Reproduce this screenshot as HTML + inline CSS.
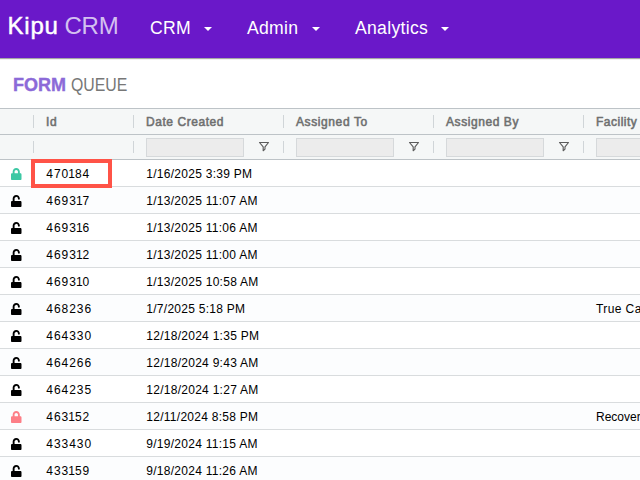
<!DOCTYPE html>
<html><head><meta charset="utf-8">
<style>
*{box-sizing:border-box;margin:0;padding:0}
html,body{width:640px;height:480px;overflow:hidden;background:#fff;font-family:"Liberation Sans",sans-serif;}
#nav{position:absolute;left:0;top:0;width:640px;height:58px;background:#6a18c9;box-shadow:0 1px 1px rgba(0,0,0,.35);}
#nav .logo{position:absolute;left:7.5px;top:9.5px;font-size:24px;line-height:32px;color:#fff;white-space:nowrap}
#nav .logo .k{-webkit-text-stroke:0.45px #fff;letter-spacing:0.8px}
#nav .logo .l{color:#d3c0f0;font-weight:normal;letter-spacing:-0.2px;margin-left:-1px}
#nav .it{position:absolute;top:17px;font-size:17.6px;letter-spacing:0.3px;line-height:22px;color:#fff;white-space:nowrap}
#nav .car{position:absolute;top:27px;width:0;height:0;border-left:4px solid transparent;border-right:4px solid transparent;border-top:4px solid #fff}
#title{position:absolute;left:13px;top:73px;font-size:18px;line-height:24px;white-space:nowrap}
#title b{color:#8c6ad8;-webkit-text-stroke:0.4px #8c6ad8}
#title span{color:#777;display:inline-block;transform-origin:0 50%;transform:scaleX(.88)}
#grid{position:absolute;left:0;top:108px;width:640px;height:372px;border-top:1px solid #bdc3c7;font-size:12px;color:#000}
.hr{position:absolute;left:0;width:640px;background:#f5f7f7;border-bottom:1px solid #bdc3c7}
.hc{position:absolute;top:0;height:100%;font-weight:normal;-webkit-text-stroke:0.55px #6f7070;color:#6f7070;font-size:12px;line-height:27px;white-space:nowrap;letter-spacing:0.55px}
.sep{position:absolute;width:1px;background:#d0d5d8}
.fi{position:absolute;top:3px;height:19px;background:#ececec;border:1px solid #d6d9db}
.row{position:absolute;left:0;width:640px;height:27px;border-bottom:1px solid #d9dcde;background:#fff}
.row.o{background:#fcfdfe}
.c{position:absolute;top:0;line-height:28px;white-space:nowrap;font-size:12px}
.c.i{letter-spacing:0.95px}
.c.i .n{letter-spacing:0;margin-left:-0.9px}
.c.d{letter-spacing:0.27px}
.lk{position:absolute;left:11.2px;top:7.7px;width:10.5px;height:12px}
.hl{position:absolute;left:31px;top:50px;width:81px;height:29px;border:4px solid #ff5347;}
.fu{position:absolute;top:5px;width:14px;height:14px;overflow:visible}
</style></head><body>
<div id="nav">
 <div class="logo"><span class="k">Kipu</span> <span class="l">CRM</span></div>
 <div class="it" style="left:150px">CRM</div><div class="car" style="left:204px"></div>
 <div class="it" style="left:247px">Admin</div><div class="car" style="left:312px"></div>
 <div class="it" style="left:355px">Analytics</div><div class="car" style="left:441px"></div>
</div>
<div id="title"><b>FORM</b> <span>QUEUE</span></div>
<div id="grid">
 <div class="hr" style="top:0;height:26px">
  <div class="hc" style="left:46px">Id</div>
  <div class="hc" style="left:146px">Date Created</div>
  <div class="hc" style="left:296px;letter-spacing:0.6px">Assigned To</div>
  <div class="hc" style="left:446px;letter-spacing:0.57px">Assigned By</div>
  <div class="hc" style="left:596px;letter-spacing:0.5px">Facility</div>
  <div class="sep" style="left:33px;top:6px;height:13px"></div>
  <div class="sep" style="left:133px;top:6px;height:13px"></div>
  <div class="sep" style="left:283px;top:6px;height:13px"></div>
  <div class="sep" style="left:433px;top:6px;height:13px"></div>
  <div class="sep" style="left:583px;top:6px;height:13px"></div>
 </div>
 <div class="hr" style="top:26px;height:25px">
  <div class="sep" style="left:33px;top:6px;height:12px"></div>
  <div class="sep" style="left:133px;top:6px;height:12px"></div>
  <div class="sep" style="left:283px;top:6px;height:12px"></div>
  <div class="sep" style="left:433px;top:6px;height:12px"></div>
  <div class="sep" style="left:583px;top:6px;height:12px"></div>
<svg class="fu" style="left:257px" viewBox="0 0 14 14"><path d="M2.5 2.5H11.5L8 6.9V9.1L6.2 10.7V6.9Z" fill="#aaa" fill-opacity="0" stroke="#5c5c5c" stroke-width="1.15" stroke-linejoin="round"/></svg><svg class="fu" style="left:407px" viewBox="0 0 14 14"><path d="M2.5 2.5H11.5L8 6.9V9.1L6.2 10.7V6.9Z" fill="#aaa" fill-opacity="0" stroke="#5c5c5c" stroke-width="1.15" stroke-linejoin="round"/></svg><svg class="fu" style="left:557px" viewBox="0 0 14 14"><path d="M2.5 2.5H11.5L8 6.9V9.1L6.2 10.7V6.9Z" fill="#aaa" fill-opacity="0" stroke="#5c5c5c" stroke-width="1.15" stroke-linejoin="round"/></svg>
  <div class="fi" style="left:146px;width:98px"></div>
  <div class="fi" style="left:296px;width:98px"></div>
  <div class="fi" style="left:446px;width:98px"></div>
  <div class="fi" style="left:596px;width:60px"></div>
 </div>
 <div id="rows">
<div class="row" style="top:51px"><svg class="lk" viewBox="0 0 448 512"><path fill="#3cc8a4" d="M400 224h-24v-72C376 68.200 307.800 0 224 0S72 68.200 72 152v72H48c-26.500 0-48 21.500-48 48v192c0 26.500 21.500 48 48 48h352c26.500 0 48-21.500 48-48V272c0-26.500-21.500-48-48-48zm-104 0H152v-72c0-39.700 32.300-72 72-72s72 32.300 72 72v72z"/></svg><div class="c i" style="left:46.3px">470<span class="n">1</span>84</div><div class="c d" style="left:146.3px">1/16/2025 3:39 PM</div></div>
<div class="row o" style="top:78px"><svg class="lk" viewBox="0 0 448 512"><path fill="#000" d="M400 256H152V152.900c0-39.600 31.700-72.500 71.300-72.900 40-.4 72.700 32.100 72.700 72v16c0 13.300 10.700 24 24 24h32c13.300 0 24-10.700 24-24v-16C376 68 307.500-.3 223.500 0 139.500.3 72 69.500 72 153.500V256H48c-26.500 0-48 21.500-48 48v160c0 26.500 21.500 48 48 48h352c26.500 0 48-21.500 48-48V304c0-26.500-21.500-48-48-48z"/></svg><div class="c i" style="left:46.3px">4693<span class="n">1</span>7</div><div class="c d" style="left:146.3px">1/13/2025 11:07 AM</div></div>
<div class="row" style="top:105px"><svg class="lk" viewBox="0 0 448 512"><path fill="#000" d="M400 256H152V152.900c0-39.600 31.700-72.500 71.300-72.900 40-.4 72.700 32.100 72.700 72v16c0 13.300 10.700 24 24 24h32c13.300 0 24-10.700 24-24v-16C376 68 307.500-.3 223.500 0 139.500.3 72 69.500 72 153.500V256H48c-26.500 0-48 21.500-48 48v160c0 26.500 21.500 48 48 48h352c26.500 0 48-21.500 48-48V304c0-26.500-21.500-48-48-48z"/></svg><div class="c i" style="left:46.3px">4693<span class="n">1</span>6</div><div class="c d" style="left:146.3px">1/13/2025 11:06 AM</div></div>
<div class="row o" style="top:132px"><svg class="lk" viewBox="0 0 448 512"><path fill="#000" d="M400 256H152V152.900c0-39.600 31.700-72.500 71.300-72.900 40-.4 72.700 32.100 72.700 72v16c0 13.300 10.700 24 24 24h32c13.300 0 24-10.700 24-24v-16C376 68 307.500-.3 223.500 0 139.500.3 72 69.500 72 153.500V256H48c-26.500 0-48 21.500-48 48v160c0 26.500 21.500 48 48 48h352c26.500 0 48-21.500 48-48V304c0-26.500-21.500-48-48-48z"/></svg><div class="c i" style="left:46.3px">4693<span class="n">1</span>2</div><div class="c d" style="left:146.3px">1/13/2025 11:00 AM</div></div>
<div class="row" style="top:159px"><svg class="lk" viewBox="0 0 448 512"><path fill="#000" d="M400 256H152V152.900c0-39.600 31.700-72.500 71.300-72.900 40-.4 72.700 32.100 72.700 72v16c0 13.300 10.700 24 24 24h32c13.300 0 24-10.700 24-24v-16C376 68 307.500-.3 223.500 0 139.500.3 72 69.500 72 153.500V256H48c-26.500 0-48 21.500-48 48v160c0 26.500 21.500 48 48 48h352c26.500 0 48-21.500 48-48V304c0-26.500-21.500-48-48-48z"/></svg><div class="c i" style="left:46.3px">4693<span class="n">1</span>0</div><div class="c d" style="left:146.3px">1/13/2025 10:58 AM</div></div>
<div class="row o" style="top:186px"><svg class="lk" viewBox="0 0 448 512"><path fill="#000" d="M400 256H152V152.900c0-39.600 31.700-72.500 71.300-72.900 40-.4 72.700 32.100 72.700 72v16c0 13.300 10.700 24 24 24h32c13.300 0 24-10.700 24-24v-16C376 68 307.500-.3 223.500 0 139.500.3 72 69.500 72 153.500V256H48c-26.500 0-48 21.500-48 48v160c0 26.500 21.500 48 48 48h352c26.500 0 48-21.500 48-48V304c0-26.500-21.500-48-48-48z"/></svg><div class="c i" style="left:46.3px">468236</div><div class="c d" style="left:146.3px">1/7/2025 5:18 PM</div><div class="c" style="left:596px;letter-spacing:0.4px">True Care</div></div>
<div class="row" style="top:213px"><svg class="lk" viewBox="0 0 448 512"><path fill="#000" d="M400 256H152V152.900c0-39.600 31.700-72.500 71.300-72.900 40-.4 72.700 32.100 72.700 72v16c0 13.300 10.700 24 24 24h32c13.300 0 24-10.700 24-24v-16C376 68 307.500-.3 223.500 0 139.500.3 72 69.500 72 153.500V256H48c-26.500 0-48 21.500-48 48v160c0 26.500 21.500 48 48 48h352c26.500 0 48-21.500 48-48V304c0-26.500-21.500-48-48-48z"/></svg><div class="c i" style="left:46.3px">464330</div><div class="c d" style="left:146.3px">12/18/2024 1:35 PM</div></div>
<div class="row o" style="top:240px"><svg class="lk" viewBox="0 0 448 512"><path fill="#000" d="M400 256H152V152.900c0-39.600 31.700-72.500 71.300-72.900 40-.4 72.700 32.100 72.700 72v16c0 13.300 10.700 24 24 24h32c13.300 0 24-10.700 24-24v-16C376 68 307.500-.3 223.500 0 139.500.3 72 69.500 72 153.500V256H48c-26.500 0-48 21.500-48 48v160c0 26.500 21.500 48 48 48h352c26.500 0 48-21.500 48-48V304c0-26.500-21.500-48-48-48z"/></svg><div class="c i" style="left:46.3px">464266</div><div class="c d" style="left:146.3px">12/18/2024 9:43 AM</div></div>
<div class="row" style="top:267px"><svg class="lk" viewBox="0 0 448 512"><path fill="#000" d="M400 256H152V152.900c0-39.600 31.700-72.500 71.300-72.900 40-.4 72.700 32.100 72.700 72v16c0 13.300 10.700 24 24 24h32c13.300 0 24-10.700 24-24v-16C376 68 307.500-.3 223.500 0 139.500.3 72 69.500 72 153.500V256H48c-26.500 0-48 21.500-48 48v160c0 26.500 21.500 48 48 48h352c26.500 0 48-21.500 48-48V304c0-26.500-21.500-48-48-48z"/></svg><div class="c i" style="left:46.3px">464235</div><div class="c d" style="left:146.3px">12/18/2024 1:27 AM</div></div>
<div class="row o" style="top:294px"><svg class="lk" viewBox="0 0 448 512"><path fill="#fd7f87" d="M400 224h-24v-72C376 68.200 307.800 0 224 0S72 68.200 72 152v72H48c-26.500 0-48 21.500-48 48v192c0 26.500 21.500 48 48 48h352c26.500 0 48-21.500 48-48V272c0-26.500-21.500-48-48-48zm-104 0H152v-72c0-39.700 32.300-72 72-72s72 32.300 72 72v72z"/></svg><div class="c i" style="left:46.3px">463<span class="n">1</span>52</div><div class="c d" style="left:146.3px">12/11/2024 8:58 PM</div><div class="c" style="left:596px">Recovery</div></div>
<div class="row" style="top:321px"><svg class="lk" viewBox="0 0 448 512"><path fill="#000" d="M400 256H152V152.900c0-39.600 31.700-72.500 71.300-72.900 40-.4 72.700 32.100 72.700 72v16c0 13.300 10.700 24 24 24h32c13.300 0 24-10.700 24-24v-16C376 68 307.500-.3 223.500 0 139.500.3 72 69.500 72 153.500V256H48c-26.500 0-48 21.500-48 48v160c0 26.500 21.500 48 48 48h352c26.500 0 48-21.500 48-48V304c0-26.500-21.500-48-48-48z"/></svg><div class="c i" style="left:46.3px">433430</div><div class="c d" style="left:146.3px">9/19/2024 11:15 AM</div></div>
<div class="row o" style="top:348px"><svg class="lk" viewBox="0 0 448 512"><path fill="#000" d="M400 256H152V152.900c0-39.600 31.700-72.500 71.300-72.900 40-.4 72.700 32.100 72.700 72v16c0 13.300 10.700 24 24 24h32c13.300 0 24-10.700 24-24v-16C376 68 307.500-.3 223.500 0 139.500.3 72 69.500 72 153.500V256H48c-26.500 0-48 21.500-48 48v160c0 26.500 21.500 48 48 48h352c26.500 0 48-21.500 48-48V304c0-26.500-21.500-48-48-48z"/></svg><div class="c i" style="left:46.3px">433<span class="n">1</span>59</div><div class="c d" style="left:146.3px">9/18/2024 11:26 AM</div></div>
<div class="hl"></div>
</div>
</div>
</body></html>
